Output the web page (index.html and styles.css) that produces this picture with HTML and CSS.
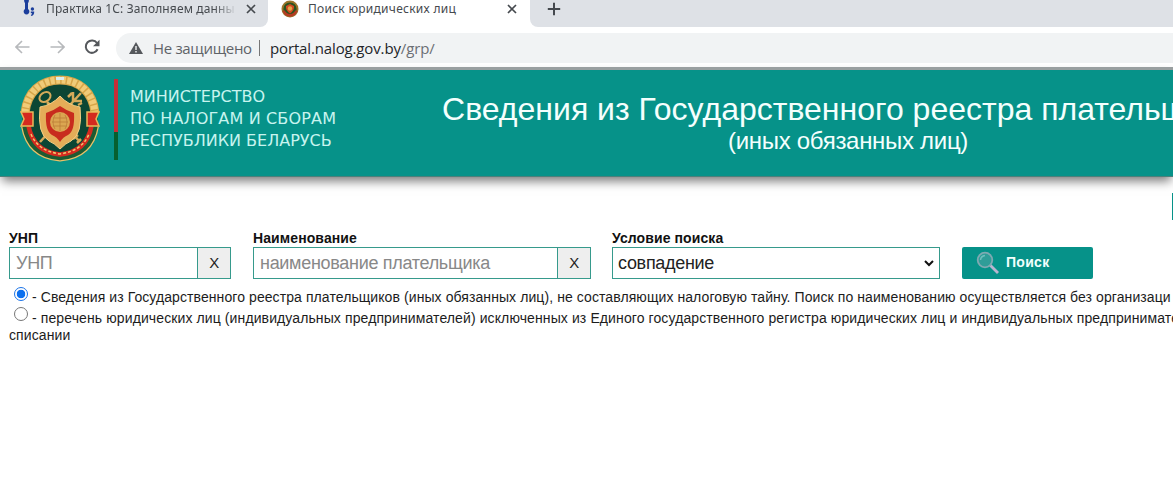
FILE: index.html
```html
<!DOCTYPE html>
<html lang="ru">
<head>
<meta charset="utf-8">
<title>Поиск юридических лиц</title>
<link rel="stylesheet" href="styles.css">
</head>
<body>
<div class="tabs">
  <div class="tab tab-idle">
    <svg class="fav" width="14" height="18" viewBox="0 0 14 18"><g fill="#1b3e9c"><circle cx="4.500" cy="2" r="2.400"/><rect x="3" y="1" width="3" height="12"/><circle cx="4.500" cy="12.600" r="2.800"/><circle cx="10.400" cy="10" r="1.700"/><path d="M8.800 12.500h3.400q.2 3.600-2.800 4.500l-.6-1q1.400-.7 1.300-1.800H8.800z"/></g></svg>
    <span class="tab-title t1">Практика 1С: Заполняем данны</span>
    <svg class="x" width="10" height="10" viewBox="0 0 10 10"><path d="M1 1l8 8M9 1l-8 8"/></svg>
  </div>
  <div class="tab tab-active">
    <svg class="fav2" width="18" height="18" viewBox="0 0 18 18"><circle cx="9" cy="9" r="8.500" fill="#9b742a"/><circle cx="9" cy="9" r="6.600" fill="#29531e"/><path d="M1.500 11q2 5.500 7.500 5.800 5.500-.3 7.500-5.800l-2-.7q-2 3.700-5.500 3.700t-5.500-3.700z" fill="#b43b22"/><path d="M9 4l4 2q.5 5-4 7.500Q4.500 11 5 6z" fill="#d24a22"/><circle cx="9" cy="8.500" r="2.200" fill="#e5a647"/></svg>
    <span class="tab-title t2">Поиск юридических лиц</span>
    <svg class="x" width="10" height="10" viewBox="0 0 10 10"><path d="M1 1l8 8M9 1l-8 8"/></svg>
  </div>
  <div class="tab tab-rest">
    <svg width="14" height="14" viewBox="0 0 14 14"><path d="M7 .8v12.400M.8 7h12.400" stroke="#45494e" stroke-width="2"/></svg>
  </div>
</div>
<div class="toolbar">
  <svg class="nav" width="15" height="14" viewBox="0 0 15 14"><path d="M14.500 7H1M7 1L1 7l6 6"/></svg>
  <svg class="nav" width="15" height="14" viewBox="0 0 15 14"><path d="M.5 7H14M8 1l6 6-6 6"/></svg>
  <svg class="reload" width="17" height="16" viewBox="0 0 17 16"><path d="M13.600 10.300A6.200 6.200 0 1 1 13 4" fill="none" stroke="#55585c" stroke-width="2"/><path d="M15.500.8v6.400H9z" fill="#55585c"/></svg>
  <div class="omnibox">
    <svg width="14" height="12" viewBox="0 0 14 12"><path d="M7 0l7 12H0z" fill="#55585c"/><path d="M7 4v4M7 9v1.500" stroke="#f1f3f4" stroke-width="1.400"/></svg>
    <span class="unsafe">Не защищено</span>
    <span class="bar"></span>
    <span class="url">portal.nalog.gov.by<span class="path">/grp/</span></span>
  </div>
</div>
<header class="head">
  <svg class="emblem" width="82" height="88" viewBox="0 0 82 88">
    <ellipse cx="40" cy="44" rx="37.500" ry="41" fill="#0b4634"/>
    <path d="M5 38C7 17 21 5 40 5s33 12 35 33" fill="none" stroke="#d6a548" stroke-width="9"/>
    <path d="M5 38C7 17 21 5 40 5s33 12 35 33" fill="none" stroke="#f0cb78" stroke-width="7" stroke-dasharray="4 1.500"/>
    <path d="M36 2h8v3h-8z" fill="#d9eef0"/>
    <path d="M5 51q5 29 35 31.500Q70 80 75 51" fill="none" stroke="#ebc065" stroke-width="8"/>
    <path d="M5 51q5 29 35 31.500Q70 80 75 51" fill="none" stroke="#1d5b32" stroke-width="5.500"/>
    <path d="M8.500 51q5 26 31.500 28.500Q66.500 77 71.500 51" fill="none" stroke="#d42a1f" stroke-width="4.500"/>
    <path d="M11 59q7 17 29 20 22-3 29-20" fill="none" stroke="#efc76d" stroke-width="1.500" stroke-dasharray="3 2"/>
    <g fill="#d42a1f" stroke="#e7b95a" stroke-width="1.500"><path d="M1 37h12v14H1l3-7zM79 37H67v14h12l-3-7z"/></g>
    <g fill="none" stroke="#d6aa59" stroke-width="3"><ellipse cx="25" cy="22" rx="6" ry="4.500" transform="rotate(-35 25 22)" stroke-width="2"/><path d="M27 27l5 5M61 18L49 31M53 17v9h9M48 22l4-4M58 30l4-2M29 57l-9 10M51 57l9 10M53 64l5-4M57 68l4-4" stroke-width="2.500"/></g>
    <path d="M40 21q8 9 20 11 3 27-9 34-5 2-11 8-6-6-11-8-12-7-9-34 12-2 20-11z" fill="#e4ad58" stroke="#f3cf84" stroke-width="1"/>
    <path d="M40 31q7 5 14 7 1 18-6 22-5 2-8 7-3-5-8-7-7-4-6-22 7-2 14-7z" fill="#c82c1e"/>
    <circle cx="40" cy="47" r="10" fill="#dba651"/>
    <path d="M33 43h14M32 47h16M33 51h14M40 38v18M35 40q-4 7 0 14M45 40q4 7 0 14" fill="none" stroke="#b97835" stroke-width=".7"/>
  </svg>
  <div class="flag"></div>
  <div class="ministry"><div class="m1">МИНИСТЕРСТВО</div><div class="m2">ПО НАЛОГАМ И СБОРАМ</div><div class="m3">РЕСПУБЛИКИ БЕЛАРУСЬ</div></div>
  <div class="titles"><div class="title">Сведения из Государственного реестра плательщиков</div><div class="subtitle">(иных обязанных лиц)</div></div>
</header>
<main class="page">
  <div class="edge"></div>
  <div class="form">
    <div class="field f1"><label>УНП</label><div class="box"><span class="ph">УНП</span><span class="clear">X</span></div></div>
    <div class="field f2"><label class="l2">Наименование</label><div class="box"><span class="ph">наименование плательщика</span><span class="clear">X</span></div></div>
    <div class="field f3"><label class="l3">Условие поиска</label><div class="box select"><span class="val">совпадение</span><svg width="10" height="7" viewBox="0 0 10 7"><path d="M1 1l4 4 4-4" fill="none" stroke="#111" stroke-width="2"/></svg></div></div>
    <div class="search"><svg width="24" height="24" viewBox="0 0 24 24"><path d="M14 14l8 8" stroke="#b9b5cf" stroke-width="2.800"/><circle cx="9" cy="9" r="7.300" fill="#2f9d98" stroke="#7fa9b2" stroke-width="1.800"/><path d="M4.500 9q.5-4 4.500-4.500" fill="none" stroke="#6fc0bd" stroke-width="1.500"/></svg><span>Поиск</span></div>
  </div>
  <div class="options">
    <div class="opt"><span class="radio on"></span><span class="o1">- Сведения из Государственного реестра плательщиков (иных обязанных лиц), не составляющих налоговую тайну. Поиск по наименованию осуществляется без организаци</span></div>
    <div class="opt second"><span class="radio"></span><span class="o2">- перечень юридических лиц (индивидуальных предпринимателей) исключенных из Единого государственного регистра юридических лиц и индивидуальных предпринимате</span></div>
    <div class="tail">списании</div>
  </div>
</main>
</body>
</html>
```
FILE: styles.css
```css
* { box-sizing: border-box; }
body { margin: 0; width: 1173px; height: 483px; overflow: hidden; background: #fff; font-family: "Liberation Sans", Arial, sans-serif; color: #1c1c1c; }
svg { display: block; flex: none; }
.tabs { display: flex; height: 28px; background: #fff; font-family: "Noto Sans", sans-serif; font-size: 12px; color: #45494e; }
.tab { display: flex; height: 27px; white-space: nowrap; }
.tab-idle { width: 268px; background: #dee1e6; border-radius: 0 0 8px 0; padding-left: 22px; }
.tab-active { width: 262px; padding-left: 13px; }
.tab-rest { flex: 1; background: #dee1e6; border-radius: 0 0 0 8px; padding: 2px 0 0 17px; }
.fav { margin: -1px 10px 0 0; }
.fav2 { margin: 0 9px 0 0; }
.tab-title { line-height: 17px; }
.t1 { width: 191px; overflow: hidden; letter-spacing: .13px; -webkit-mask-image: linear-gradient(90deg, #000 88%, transparent); mask-image: linear-gradient(90deg, #000 88%, transparent); }
.t2 { width: 199px; letter-spacing: .27px; }
.x { margin-top: 4px; margin-left: 9px; fill: none; stroke: #45494e; stroke-width: 1.7; }
.t2 + .x { margin-left: 0; }
.toolbar { display: flex; height: 39px; align-items: center; padding: 0 0 1px 15px; font-family: "Open Sans", sans-serif; font-size: 15px; }
.nav { fill: none; stroke: #b7b9bc; stroke-width: 1.6; margin-right: 20px; }
.reload { margin: 0 15px 0 -1px; }
.omnibox { flex: 1; display: flex; align-items: center; height: 30px; margin-top: 2px; padding-left: 13px; border-radius: 15px 0 0 15px; background: #f1f3f4; white-space: nowrap; }
.unsafe { margin-left: 10px; width: 98px; color: #5f6368; letter-spacing: -.33px; }
.bar { width: 1px; height: 16px; margin: 0 10px 0 8px; background: #777; }
.url { color: #222529; letter-spacing: -.14px; }
.path { color: #6b6f74; }
.head { position: relative; display: flex; height: 110px; padding-left: 20px; border-top: 3px solid #999fa0; border-bottom: 1px solid #4c807b; background: #069289; box-shadow: 0 6px 10px -2px #777; }
.emblem { margin-top: 5px; }
.flag { flex: none; width: 4px; height: 81px; margin: 9px 12px 0 12px; background: linear-gradient(#c52f38 0 66%, #06602f 66%); }
.ministry { flex: none; width: 312px; padding-top: 16px; font-family: "DejaVu Sans", sans-serif; font-size: 16px; line-height: 22px; color: #c8f4ef; white-space: nowrap; }
.m2 { letter-spacing: .16px; }
.titles { width: 812px; flex: none; text-align: center; color: #f4fffd; white-space: nowrap; padding-top: 21px; }
.title { font-size: 32px; line-height: 36px; }
.subtitle { font-size: 24px; line-height: 27px; letter-spacing: -.3px; }
.page { padding-left: 9px; }
.edge { width: 1px; height: 27px; margin: 16px 0 0 1163px; background: #069289; }
.form { display: flex; align-items: flex-end; margin-top: 10px; height: 49px; }
.field { display: flex; flex-direction: column; }
.field label { font-size: 14px; line-height: 17px; font-weight: bold; color: #111; white-space: nowrap; letter-spacing: .1px; }
.box { display: flex; height: 32px; border: 1px solid #369a8c; line-height: 30px; font-size: 18px; color: #888; letter-spacing: -.3px; }
.f1 { width: 222px; margin-right: 22px; }
.f2 { width: 338px; margin-right: 21px; }
.f3 { width: 328px; margin-right: 22px; }
.ph { flex: 1; padding-left: 6px; white-space: nowrap; }
.clear { width: 33px; border-left: 1px solid #369a8c; background: #eee; color: #222; font-size: 15px; text-align: center; }
.select { align-items: center; justify-content: space-between; padding: 0 5px; color: #222; }
.search { display: flex; width: 131px; height: 32px; padding: 4px 0 0 14px; background: #069289; border-radius: 2px; color: #f1fffd; font-size: 14px; font-weight: bold; line-height: 22px; letter-spacing: .3px; }
.search span { margin-left: 6px; }
.options { padding-top: 8px; font-size: 14px; white-space: nowrap; letter-spacing: .1px; }
.opt { display: flex; height: 20px; line-height: 20px; padding-left: 5px; }
.o1 { letter-spacing: .083px; }
.o2 { letter-spacing: .108px; }
.second { height: 22px; line-height: 22px; }
.radio { flex: none; width: 14px; height: 14px; margin: 0 4px 0 0; border: 1px solid #777; border-radius: 50%; }
.radio.on { border: 1.5px solid #1a73e8; background: radial-gradient(circle, #0b70ef 0 4px, #fff 4.6px); }
.tail { line-height: 12px; }
```
